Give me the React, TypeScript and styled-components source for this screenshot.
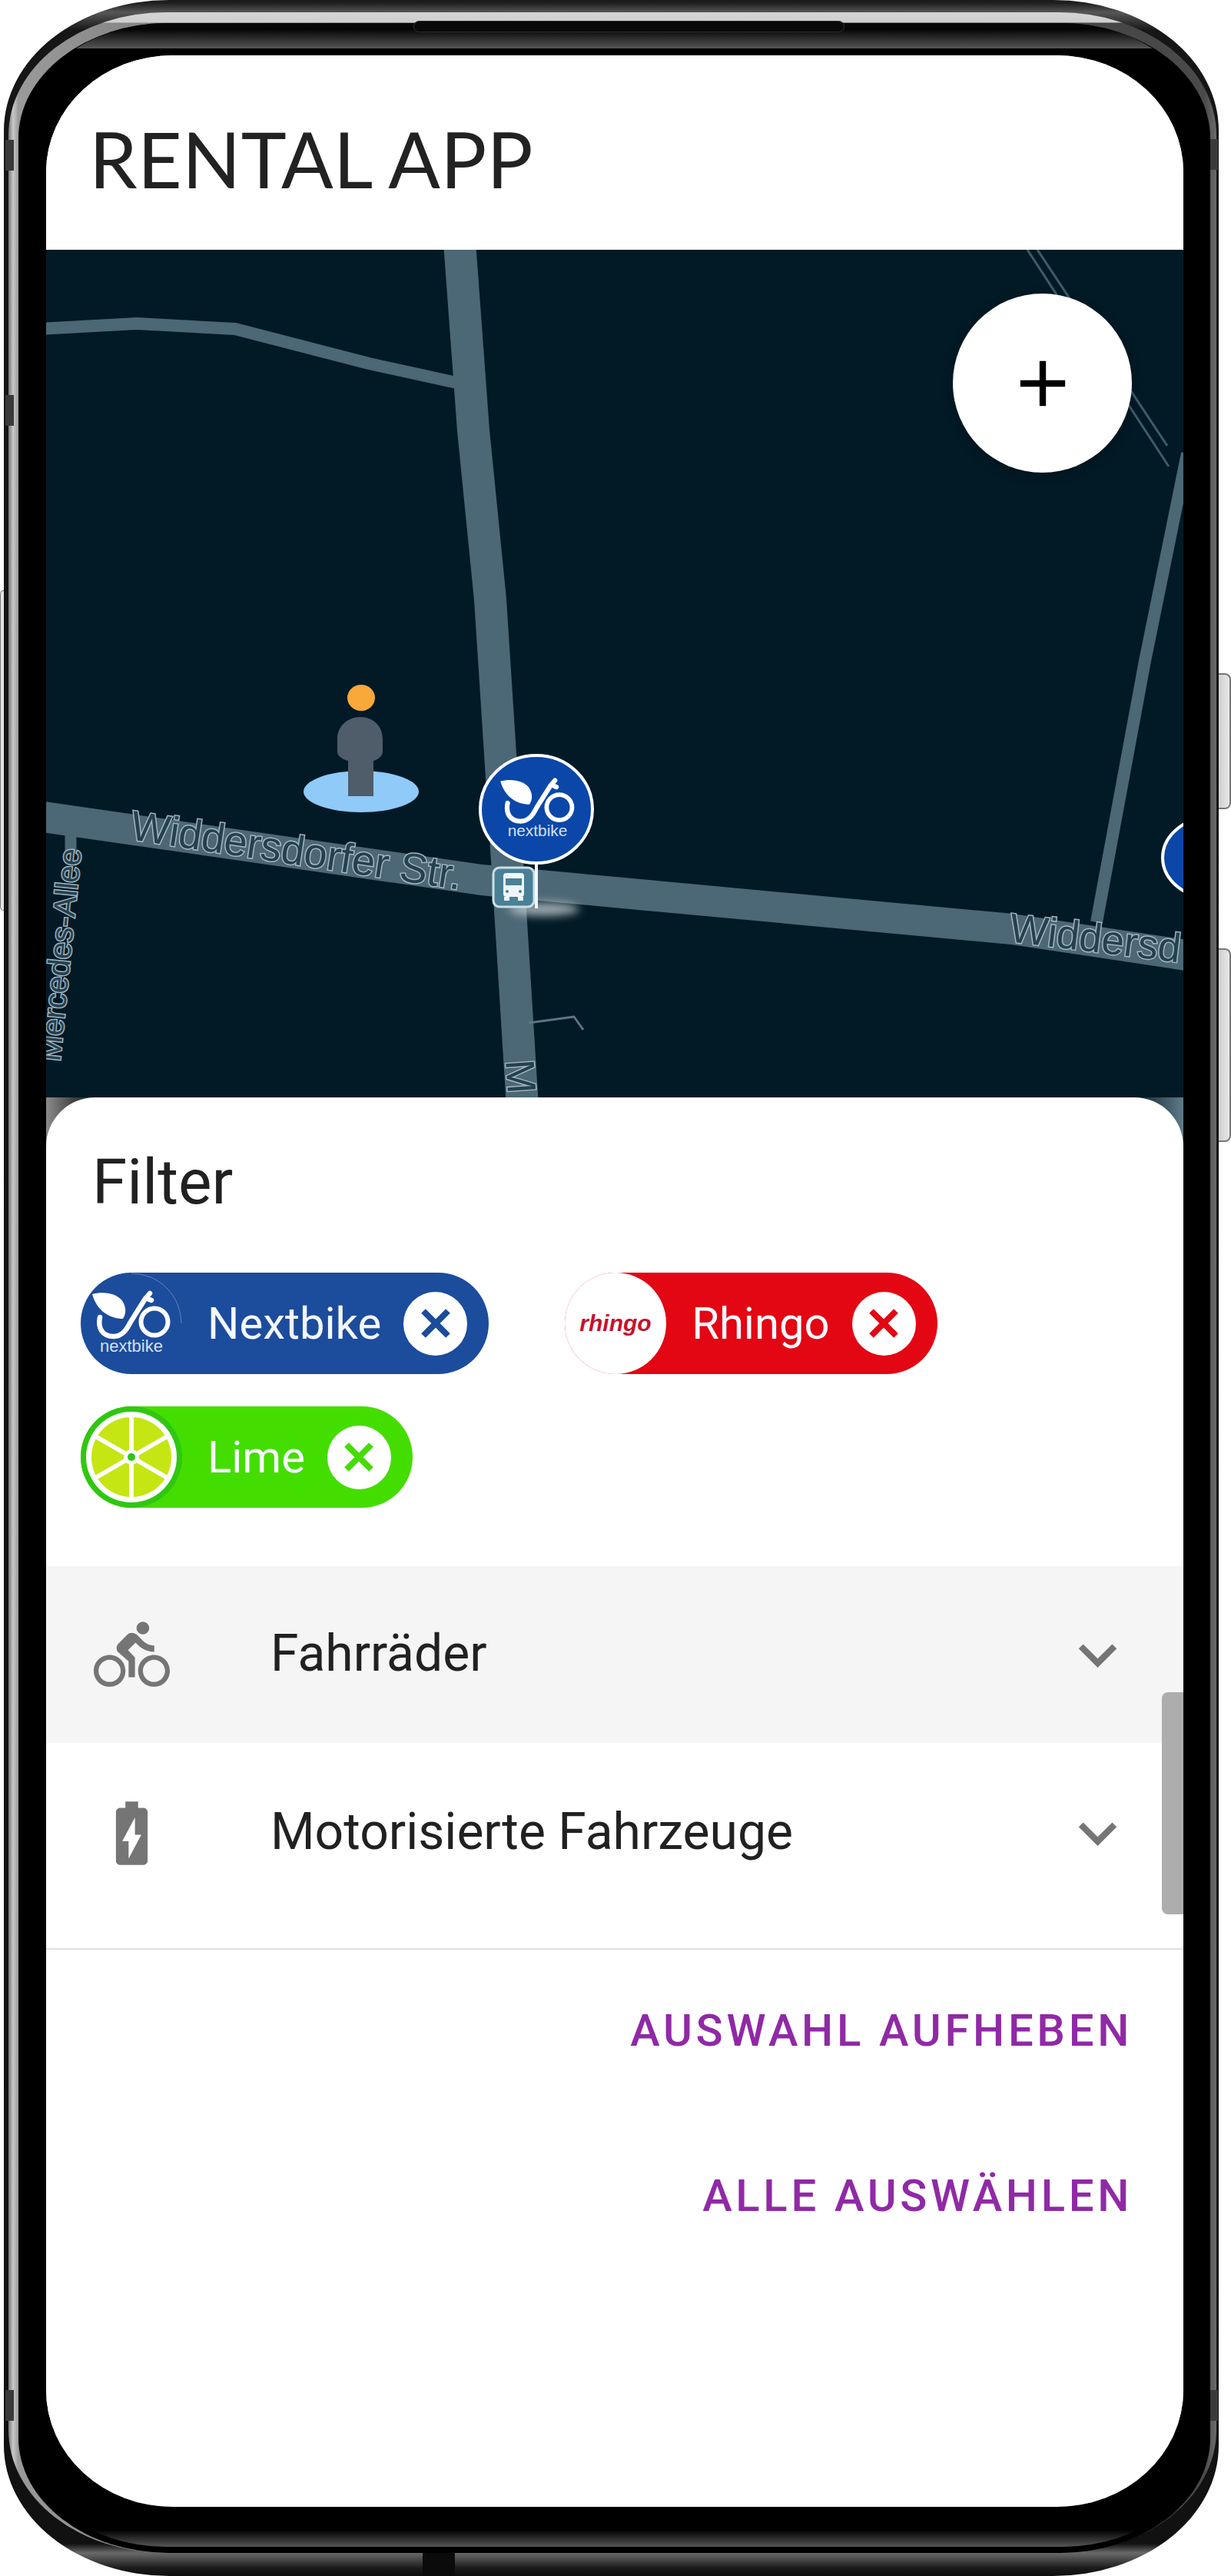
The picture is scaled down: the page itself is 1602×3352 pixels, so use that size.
import styled, { createGlobalStyle } from 'styled-components'
import { MdAdd, MdBatteryChargingFull, MdDirectionsBike, MdExpandMore } from 'react-icons/md'

const Global = createGlobalStyle`
  html, body {
    margin: 0;
    background: #fff;
  }
  * {
    box-sizing: border-box;
  }
`

const Device = styled.div`
  position: relative;
  width: 1602px;
  height: 3352px;
  padding-left: 5px;
  overflow: hidden;
  background: #fff;
`

const Shell = styled.div`
  width: 1581px;
  height: 3352px;
  padding: 16px 3px 30px 6px;
  border-radius: 215px / 170px;
  background: linear-gradient(
    180deg,
    #1a1a1a 0,
    #1f1f1f 4px,
    #565656 16px,
    #161616 40px,
    #111 3310px,
    #6a6a6a 3322px,
    #1a1a1a 3342px,
    #0e0e0e 3352px
  );
`

const Rim = styled.div`
  height: 100%;
  padding: 14px 8px 0 13px;
  border-radius: 205px / 160px;
  background:
    linear-gradient(180deg, #d4d4d4 0, #cfcfcf 13px, transparent 14px),
    linear-gradient(90deg, #777 0, #c9c9c9 6px, #9a9a9a 13px, #333 50%, #4a4a4a 99%, #6b6b6b 100%);
`

const Bezel = styled.div`
  height: 100%;
  padding: 0 6px 8px;
  border-radius: 195px / 150px;
  background: #000;
`

const Glass = styled.div`
  height: 100%;
  padding: 42px 29px 52px 30px;
  border-radius: 185px / 150px;
  background: linear-gradient(
    180deg,
    #0a0a0a 0,
    #050505 8px,
    #565656 33px,
    #000 33px,
    #000 3262px,
    #565656 3284px
  );
  background-size: 100% 3284px;
`

const Screen = styled.div`
  display: flex;
  flex-direction: column;
  height: 100%;
  overflow: hidden;
  border-radius: 165px / 152px;
  background: #fff;
`

const Speaker = styled.div`
  position: absolute;
  top: 27px;
  left: 538px;
  width: 561px;
  height: 15px;
  border: 1px solid #2e2e2e;
  border-radius: 8px;
  background: #090909;
`

const Port = styled.div`
  position: absolute;
  bottom: 0;
  left: 550px;
  width: 42px;
  height: 30px;
  background: #0b0b0b;
`

const SideKey = styled.div<{ $top: number; $height: number }>`
  position: absolute;
  top: ${({ $top }) => $top}px;
  right: 0;
  width: 16px;
  height: ${({ $height }) => $height}px;
  border: 2px solid #777;
  border-left: 0;
  border-radius: 0 8px 8px 0;
  background: linear-gradient(90deg, #cfcfcf, #e8e8e8);
`

const LeftKey = styled.div`
  position: absolute;
  top: 768px;
  left: 0;
  width: 5px;
  height: 417px;
  border: 1px solid #777;
  border-right: 0;
  border-radius: 5px 0 0 5px;
  background: #e4e4e4;
`

const AntennaMark = styled.div<{ $top: number; $side: 'left' | 'right' }>`
  position: absolute;
  top: ${({ $top }) => $top}px;
  ${({ $side }) => ($side === 'left' ? 'left: 7px; width: 11px;' : 'left: 1575px; width: 10px;')}
  height: 40px;
  background: #3a3a3a;
`

const Header = styled.header`
  display: flex;
  align-items: center;
  flex: none;
  height: 253px;
  padding: 14px 0 0 56px;
  background: #fff;
`

const AppTitle = styled.h1`
  margin: 0;
  font-family: Lato, 'Liberation Sans', sans-serif;
  font-size: 100px;
  font-weight: 400;
  line-height: 1;
  letter-spacing: 0.3px;
  color: #222;
`

const MapArea = styled.div`
  position: relative;
  flex: none;
  height: 1103px;
  background: #021a26;
`

const MapCanvas = styled.svg`
  display: block;
`

const RoadLine = styled.path<{ $w: number; $c?: string }>`
  fill: none;
  stroke: ${({ $c }) => $c || '#4c6775'};
  stroke-width: ${({ $w }) => $w}px;
  stroke-linejoin: round;
`

const MapLabel = styled.text<{ $size: number }>`
  font-family: 'Liberation Sans', Arial, sans-serif;
  font-size: ${({ $size }) => $size}px;
  fill: #24414f;
  stroke: #a3b6c0;
  stroke-width: 3px;
  paint-order: stroke;
`

const ZoomButton = styled.button`
  position: absolute;
  top: 57px;
  left: 1180px;
  display: flex;
  align-items: center;
  justify-content: center;
  width: 233px;
  height: 233px;
  padding: 0;
  border: 0;
  border-radius: 50%;
  background: #fff;
  color: #000;
  box-shadow: 0 4px 14px rgba(0, 0, 0, 0.25);
`

const SheetBackdrop = styled.div`
  flex: 1;
  display: flex;
  background: linear-gradient(
    90deg,
    #8c8c8c 0,
    #3a3a3a 40px,
    #0f1f28 90px,
    #021a26 calc(100% - 70px),
    #607a87 100%
  );
`

const Sheet = styled.section`
  position: relative;
  flex: 1;
  padding-top: 69px;
  border-radius: 64px 64px 0 0;
  background: #fff;
`

const SheetTitle = styled.h2`
  margin: 0 0 77px;
  padding-left: 60px;
  font-family: Roboto, 'Liberation Sans', sans-serif;
  font-size: 82px;
  font-weight: 400;
  line-height: 1;
  color: #212121;
`

const ChipWrap = styled.div`
  display: flex;
  flex-wrap: wrap;
  gap: 42px 99px;
  padding-left: 45px;
  margin-bottom: 76px;
`

const Chip = styled.div<{ $bg: string }>`
  display: inline-flex;
  align-items: center;
  height: 132px;
  padding-right: 28px;
  border-radius: 66px;
  background: ${({ $bg }) => $bg};
  color: ${({ $bg }) => $bg};
`

const ChipAvatar = styled.svg`
  display: block;
  flex: none;
  width: 132px;
  height: 132px;
`

const ChipLabel = styled.span`
  margin: 0 29px 0 33px;
  font-family: Roboto, 'Liberation Sans', sans-serif;
  font-size: 58px;
  font-weight: 400;
  line-height: 1;
  color: #f4f8ff;
`

const ChipDelete = styled.span`
  display: flex;
  align-items: center;
  justify-content: center;
  flex: none;
  width: 83px;
  height: 83px;
  border-radius: 50%;
  background: #fff;
`

const Row = styled.div<{ $active?: boolean }>`
  display: flex;
  align-items: center;
  height: 230px;
  padding: 0 62px;
  background: ${({ $active }) => ($active ? '#f5f5f5' : '#fff')};
  color: #757575;

  & + & {
    margin-top: 2px;
  }
`

const RowLabel = styled.span`
  flex: 1;
  margin: -2px 0 0 131px;
  font-family: Roboto, 'Liberation Sans', sans-serif;
  font-size: 66px;
  font-weight: 400;
  line-height: 1;
  color: #212121;
`

const Divider = styled.hr`
  height: 2px;
  margin: 35px 0 0;
  border: 0;
  background: #e0e0e0;
`

const Actions = styled.div`
  display: flex;
  flex-direction: column;
  align-items: flex-end;
  gap: 145px;
  padding: 70px 66px 0 0;
`

const ActionButton = styled.button`
  height: 70px;
  padding: 0;
  border: 0;
  background: none;
  font-family: Roboto, 'Liberation Sans', sans-serif;
  font-size: 58px;
  font-weight: 500;
  line-height: 70px;
  letter-spacing: 4.7px;
  color: #9029a6;
`

const ScrollThumb = styled.div`
  position: absolute;
  top: 774px;
  right: 0;
  width: 28px;
  height: 289px;
  border-radius: 8px 0 0 8px;
  background: #adadad;
`

function NextbikeMark() {
  return (
    <>
      <path d="M15 28C30 24 50 27 56 40C60 49 58 55 55 60C38 60 21 50 15 28Z" fill="#fff" />
      <path
        d="M25 58C22 72 28 83 43 83C54 83 60 74 65 64L84 34L90 27M85 33L92 36"
        fill="none"
        stroke="#fff"
        strokeWidth="6.5"
        strokeLinecap="round"
      />
      <circle cx="96" cy="64" r="17.5" fill="none" stroke="#fff" strokeWidth="6" />
      <text x="66" y="103" textAnchor="middle" fontFamily="'Liberation Sans', sans-serif" fontSize="22" fill="#d5e0f2">
        nextbike
      </text>
    </>
  )
}

function DeleteIcon() {
  return (
    <svg width="40" height="40" viewBox="0 0 40 40">
      <path d="M4 4L36 36M36 4L4 36" stroke="currentColor" strokeWidth="8" fill="none" />
    </svg>
  )
}

function LimeSlices() {
  return (
    <>
      <circle cx="66" cy="66" r="66" fill="#2fc710" />
      <circle cx="66" cy="66" r="59" fill="#fff" />
      <circle cx="66" cy="66" r="52" fill="#c5e612" />
      <path
        d="M66 10V122M17.5 38L114.5 94M17.5 94L114.5 38"
        stroke="#fff"
        strokeWidth="6"
        fill="none"
      />
      <circle cx="66" cy="66" r="10" fill="#fff" />
      <circle cx="66" cy="66" r="5" fill="#2fc710" />
    </>
  )
}

function MapDrawing() {
  return (
    <MapCanvas width="1480" height="1103" viewBox="60 325 1480 1103">
      <RoadLine $w={42} d="M598 315L616 560L638 780L660 1120L680 1440" />
      <RoadLine $w={16} d="M50 428L178 421L306 428L480 473L594 498" />
      <RoadLine $w={40} d="M50 1062L627 1145L800 1161L1317 1209L1550 1244" />
      <RoadLine $w={16} d="M1545 590L1490 860L1427 1200" />
      <RoadLine $w={15} d="M92 1075V1110" />
      <RoadLine $w={3} $c="#3d5c6b" d="M1337 325L1521 607M1350 325L1519 580" />
      <RoadLine $w={3} $c="#5b7583" d="M688 1331L747 1323L759 1340" />

      <MapLabel $size={54} transform="translate(168 1092) rotate(8.7)">
        Widdersdorfer Str.
      </MapLabel>
      <MapLabel $size={53} transform="translate(1312 1225) rotate(7)">
        Widdersd
      </MapLabel>
      <MapLabel $size={40} transform="translate(78 1382) rotate(-84.3)">
        Mercedes-Allee
      </MapLabel>
      <MapLabel $size={53} transform="translate(658 1380) rotate(86)">
        M
      </MapLabel>

      <ellipse cx="470" cy="1030" rx="75" ry="27" fill="#90caf9" />
      <ellipse cx="470" cy="908" rx="18" ry="17" fill="#f9a83a" />
      <path
        d="M439 962C439 945 452 933 469 933C486 933 498 945 498 962V978C498 984 492 988 486 990V1036H453V990C446 988 439 984 439 978Z"
        fill="#4e5d69"
      />

      <ellipse cx="708" cy="1183" rx="46" ry="9" fill="#cfd8dc" opacity="0.75" filter="url(#pinShadow)" />
      <defs>
        <filter id="pinShadow" x="-30%" y="-100%" width="160%" height="300%">
          <feGaussianBlur stdDeviation="6" />
        </filter>
      </defs>
      <rect x="642" y="1129" width="53" height="51" rx="8" fill="#4a8096" stroke="#c9dfe8" strokeWidth="3" />
      <rect x="655" y="1136" width="27" height="31" rx="4" fill="#eef5f8" />
      <rect x="658" y="1143" width="21" height="9" fill="#4a8096" />
      <path d="M656 1167h7v5h-7zM674 1167h7v5h-7z" fill="#eef5f8" />
      <circle cx="660" cy="1160" r="2" fill="#4a8096" />
      <circle cx="677" cy="1160" r="2" fill="#4a8096" />

      <rect x="696" y="1120" width="4" height="62" fill="#f4f7f8" />
      <ellipse cx="698" cy="1053" rx="73" ry="70" fill="#0a47a8" stroke="#fff" strokeWidth="4" />
      <svg x="637" y="990" width="125" height="125" viewBox="0 0 132 132">
        <NextbikeMark />
      </svg>
      <ellipse cx="1584" cy="1116" rx="71" ry="55" fill="#0a47a8" stroke="#fff" strokeWidth="4" />
    </MapCanvas>
  )
}

export default function App() {
  return (
    <>
      <Global />
      <Device>
        <Shell>
          <Rim>
            <Bezel>
              <Glass>
                <Screen>
                  <Header>
                    <AppTitle>RENTAL APP</AppTitle>
                  </Header>
                  <MapArea>
                    <MapDrawing />
                    <ZoomButton aria-label="Zoom">
                      <MdAdd size={100} />
                    </ZoomButton>
                  </MapArea>
                  <SheetBackdrop>
                    <Sheet>
                      <SheetTitle>Filter</SheetTitle>
                      <ChipWrap>
                        <Chip $bg="#1c4c9c">
                          <ChipAvatar viewBox="0 0 132 132">
                            <path d="M66 1A65 65 0 0 1 131 66" fill="none" stroke="rgba(255,255,255,0.3)" strokeWidth="1" />
                            <NextbikeMark />
                          </ChipAvatar>
                          <ChipLabel>Nextbike</ChipLabel>
                          <ChipDelete>
                            <DeleteIcon />
                          </ChipDelete>
                        </Chip>
                        <Chip $bg="#e30613">
                          <ChipAvatar viewBox="0 0 132 132">
                            <circle cx="66" cy="66" r="66" fill="#fff" />
                            <text
                              x="66"
                              y="76"
                              textAnchor="middle"
                              fontFamily="'Liberation Sans', sans-serif"
                              fontSize="30"
                              fontWeight="700"
                              fontStyle="italic"
                              fill="#c4122f"
                            >
                              rhingo
                            </text>
                          </ChipAvatar>
                          <ChipLabel>Rhingo</ChipLabel>
                          <ChipDelete>
                            <DeleteIcon />
                          </ChipDelete>
                        </Chip>
                        <Chip $bg="#44dd00">
                          <ChipAvatar viewBox="0 0 132 132">
                            <LimeSlices />
                          </ChipAvatar>
                          <ChipLabel>Lime</ChipLabel>
                          <ChipDelete>
                            <DeleteIcon />
                          </ChipDelete>
                        </Chip>
                      </ChipWrap>
                      <Row $active>
                        <MdDirectionsBike size={99} />
                        <RowLabel>Fahrräder</RowLabel>
                        <MdExpandMore size={99} />
                      </Row>
                      <Row>
                        <MdBatteryChargingFull size={99} />
                        <RowLabel>Motorisierte Fahrzeuge</RowLabel>
                        <MdExpandMore size={99} />
                      </Row>
                      <Divider />
                      <Actions>
                        <ActionButton>AUSWAHL AUFHEBEN</ActionButton>
                        <ActionButton>ALLE AUSWÄHLEN</ActionButton>
                      </Actions>
                      <ScrollThumb />
                    </Sheet>
                  </SheetBackdrop>
                </Screen>
              </Glass>
            </Bezel>
          </Rim>
        </Shell>
        <Speaker />
        <Port />
        <LeftKey />
        <SideKey $top={876} $height={177} />
        <SideKey $top={1234} $height={252} />
        <AntennaMark $side="left" $top={182} />
        <AntennaMark $side="left" $top={514} />
        <AntennaMark $side="left" $top={3110} />
        <AntennaMark $side="right" $top={181} />
        <AntennaMark $side="right" $top={3110} />
      </Device>
    </>
  )
}
